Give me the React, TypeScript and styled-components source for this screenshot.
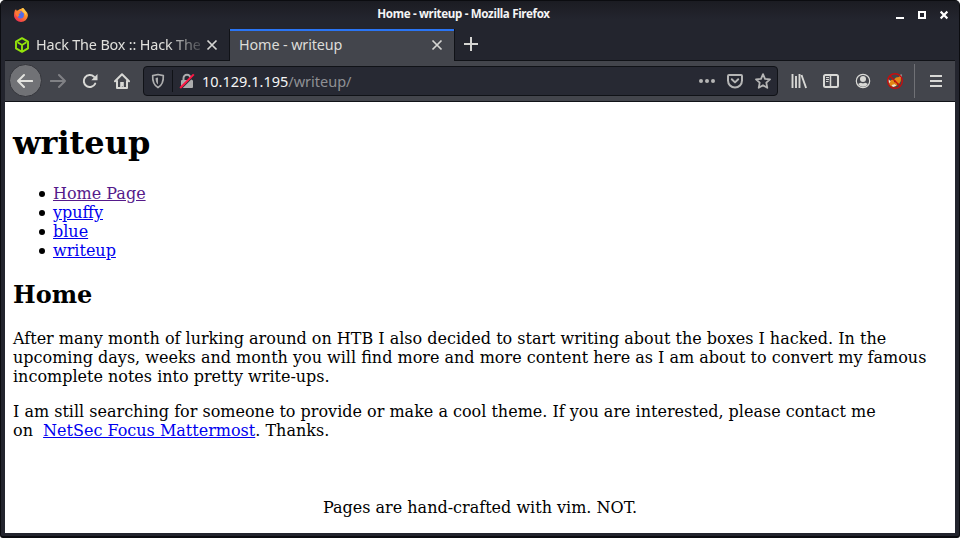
import React from "react";
import styled, { createGlobalStyle } from "styled-components";

const Global = createGlobalStyle`
  * { box-sizing: border-box; }
  body { margin: 0; background: #fff; overflow: hidden; }
  svg { display: block; flex: none; }
`;

const Window = styled.div`
  width: 960px;
  height: 538px;
  display: flex;
  flex-direction: column;
  background: #23252e;
  border: 1px solid #0b0c10;
  border-bottom-width: 2px;
  border-radius: 5px 5px 3px 3px;
  padding: 0 4px 3px;
  overflow: hidden;
  font-family: "Noto Sans", sans-serif;
`;

const TitleBar = styled.header`
  height: 28px;
  flex: none;
  margin: 0 -4px;
  padding: 0 11px 0 12px;
  display: grid;
  grid-template-columns: 26px 1fr 60px;
  align-items: center;
  background: linear-gradient(#1b1c22, #23252e 18px);
`;

const WindowTitle = styled.div`
  text-align: center;
  color: #f4f4f5;
  font-size: 11.6px;
  font-weight: 700;
  line-height: 26px;
  height: 28px;
  letter-spacing: -0.34px;
  white-space: nowrap;
`;

const WindowButtons = styled.div`
  display: flex;
  justify-content: flex-end;
  gap: 14px;
`;

const TabStrip = styled.nav`
  height: 32px;
  flex: none;
  display: flex;
  align-items: stretch;
`;

const Tab = styled.div<{ $active?: boolean }>`
  width: ${(p) => (p.$active ? 224 : 225)}px;
  flex: none;
  display: flex;
  align-items: center;
  padding: ${(p) => (p.$active ? "0 11px 2px 9px" : "1px 11px 0 9px")};
  color: ${(p) => (p.$active ? "#dcdcd8" : "#e0e0dc")};
  background: ${(p) => (p.$active ? "#43454c" : "transparent")};
  border-top: ${(p) => (p.$active ? "2px solid #2a75f5" : "0")};
  border-bottom: ${(p) => (p.$active ? "0" : "1px solid #101217")};
  border-right: ${(p) => (p.$active ? "0" : "1px solid #101217")};
`;

const TabLabel = styled.span<{ $fade?: boolean }>`
  flex: 1;
  min-width: 0;
  margin-left: ${(p) => (p.$fade ? 6 : 0)}px;
  margin-right: ${(p) => (p.$fade ? 6 : 0)}px;
  font-size: 14.4px;
  letter-spacing: ${(p) => (p.$fade ? "-0.16px" : "-0.13px")};
  line-height: 20px;
  white-space: nowrap;
  overflow: hidden;
  mask-image: ${(p) => (p.$fade ? "linear-gradient(to left, rgba(0, 0, 0, 0.2), #000 32px)" : "none")};
`;

const TabRest = styled.div`
  flex: 1;
  padding: 8px 0 0 9px;
  border-left: 1px solid #101217;
  border-bottom: 1px solid #101217;
`;

const Toolbar = styled.div`
  height: 41px;
  flex: none;
  display: flex;
  align-items: center;
  background: #43454c;
  border-bottom: 1px solid #101217;
  padding: 0 0 1px 3.5px;
`;

const BackButton = styled.div`
  width: 33px;
  height: 33px;
  flex: none;
  border-radius: 50%;
  border: 1px solid #34353b;
  background: #717276;
  display: flex;
  align-items: center;
  justify-content: center;
`;

const Slot = styled.div<{ $w: number }>`
  width: ${(p) => p.$w}px;
  flex: none;
  display: flex;
  justify-content: center;
`;

const UrlBar = styled.div`
  width: 635px;
  height: 30px;
  flex: none;
  margin-left: 5px;
  display: flex;
  align-items: center;
  background: #272933;
  border: 1px solid #101217;
  border-radius: 4px;
  padding: 0 6px 0 5px;
`;

const Divider = styled.i<{ $h: number; $light?: boolean }>`
  width: 1px;
  height: ${(p) => p.$h}px;
  background: ${(p) => (p.$light ? "#707176" : "#101217")};
`;

const Address = styled.div`
  flex: 1;
  margin-left: 7px;
  color: #f5f5f5;
  font-size: 14.5px;
  line-height: 20px;
  white-space: nowrap;
`;

const AddressPath = styled.span`
  color: #8f9093;
`;

const UrlActions = styled.div`
  display: flex;
  align-items: center;
  gap: 12px;
`;

const Page = styled.main`
  flex: 1;
  min-height: 0;
  overflow: hidden;
  background: #fff;
  color: #000;
  padding: 23px 8px 0;
  font: 16px/19px "DejaVu Serif", serif;
`;

const Title = styled.h1`
  margin: 0 0 22px;
  font-size: 32px;
  line-height: 37px;
`;

const Links = styled.ul`
  margin: 0 0 20px;
  padding-left: 26px;
  list-style: none;
`;

const LinkItem = styled.li`
  display: flex;
  align-items: center;
  height: 19px;
  &::before {
    content: "";
    width: 6.4px;
    height: 6.4px;
    margin: 1px 7.6px 0 0;
    border-radius: 50%;
    background: #000;
  }
`;

const Link = styled.a<{ $visited?: boolean }>`
  color: ${(p) => (p.$visited ? "#551a8b" : "#0000ee")};
  text-decoration: underline;
`;

const Heading = styled.h2`
  margin: 0 0 20px;
  font-size: 24px;
  line-height: 29px;
`;

const Paragraph = styled.p`
  margin: 0 0 16px;
  white-space: nowrap;
`;

const Footer = styled.footer`
  margin-top: 58px;
  text-align: center;
`;

const FirefoxLogo = () => (
  <svg width="16" height="16" viewBox="0 0 16 16">
    <defs>
      <linearGradient id="flame" x1="1" y1="0" x2="0.2" y2="1">
        <stop offset="0" stopColor="#ffe14d" />
        <stop offset="0.45" stopColor="#ff8a2b" />
        <stop offset="1" stopColor="#ed2555" />
      </linearGradient>
    </defs>
    <path d="M1.8 3.6 3 2.2l.7 1.5 1.6-.4C6.4 2 7.5 2 7.7 2l1.8-1 1.2.3L12 3.5c1.7 1 2.9 2.8 2.9 5.2a7 7 0 0 1-13.9.2c0-2 .2-3.8.8-5.3z" fill="url(#flame)" />
    <path d="M4.4 5.5 8 4l3 2.5-.3 3A3.3 3.3 0 0 1 5 10.3L4.3 8z" fill="#526ce8" />
    <path d="M3 4.2l4 .5 1 1-2.5 1.4.8 1.5L4.5 10 2.2 7z" fill="#ff7a32" />
    <path d="M9.5 1c2.2 1.2 4.7 3.8 3.3 7.4-.4-1.5-1.4-2.4-2.4-3.2C9.3 4.2 8.8 2.8 9.5 1z" fill="#ffc64a" />
  </svg>
);

const HackTheBox = () => (
  <svg width="16" height="16" viewBox="0 0 16 16" fill="none" stroke="#93e30b" strokeWidth="1.9" strokeLinejoin="round">
    <path d="M8 1.2 14 4.6v6.8L8 14.8 2 11.4V4.6zM3.5 5.3 8 8l4.5-2.7M8 8v6" />
  </svg>
);

const Close = () => (
  <svg width="12" height="12" viewBox="0 0 12 12" stroke="#d5d5d2" strokeWidth="1.7">
    <path d="M1.5 1.5l9 9m0-9l-9 9" />
  </svg>
);

const Minimise = () => (
  <svg width="8" height="10" viewBox="0 0 8 10" fill="#fff"><path d="M0 7h8v2H0z" /></svg>
);
const Maximise = () => (
  <svg width="8" height="10" viewBox="0 0 8 10" fill="none" stroke="#fff" strokeWidth="2"><path d="M1 2h6v6H1z" /></svg>
);
const CloseWindow = () => (
  <svg width="8" height="10" viewBox="0 0 8 10" stroke="#fff" strokeWidth="2.2"><path d="M.6 1.6l6.8 6.8m0-6.8L.6 8.4" /></svg>
);

const Plus = () => (
  <svg width="14" height="14" viewBox="0 0 14 14" stroke="#d5d5d2" strokeWidth="2"><path d="M0 7h14M7 0v14" /></svg>
);

const Arrow = ({ forward }: { forward?: boolean }) => (
  <svg width="16" height="16" viewBox="0 0 16 16" fill="none" stroke={forward ? "#808185" : "#e2e2de"} strokeWidth="2" strokeLinecap="round" strokeLinejoin="round">
    <path d={forward ? "M.8 8H15M9 2l6 6-6 6" : "M15.2 8H1M7 2L1 8l6 6"} />
  </svg>
);

const Reload = () => (
  <svg width="16" height="16" viewBox="0 0 16 16" fill="none" stroke="#d8d8d5" strokeWidth="2" strokeLinecap="round">
    <path d="M13.2 10.6A6 6 0 1 1 12 3.7" />
    <path d="M15.5 1v6.2H9.3z" fill="#d8d8d5" stroke="none" />
  </svg>
);

const Home = () => (
  <svg width="16" height="16" viewBox="0 0 16 16" fill="none" stroke="#d8d8d5" strokeWidth="2" strokeLinecap="round" strokeLinejoin="round">
    <path d="M1 8.2 8 1.3l7 6.9" />
    <path d="M3 8v7h10V8" />
    <path d="M6.2 9h3.6v6H8.9v-1.6H7.8V15H6.2z" fill="#d8d8d5" stroke="none" />
  </svg>
);

const Shield = () => (
  <svg width="14" height="16" viewBox="0 0 14 16" fill="none" stroke="#acacad" strokeWidth="1.7" strokeLinejoin="round">
    <path d="M7 1.5 12.3 2.6c.3 5.5-1 9.5-5.3 12-4.3-2.5-5.6-6.5-5.3-12z" />
    <path d="M7 4.6v7C5.1 9.8 4.6 7.8 4.6 5z" fill="#acacad" stroke="none" />
  </svg>
);

const InsecureLock = () => (
  <svg width="16" height="16" viewBox="0 0 16 16" fill="none">
    <path d="M4.5 8V5.2a3.5 3.5 0 0 1 7 0V8" stroke="#acacad" strokeWidth="2" />
    <rect x="2" y="7" width="12" height="8" rx="1" fill="#acacad" />
    <path d="M2 15.2 15 2.2" stroke="#272933" strokeWidth="2" />
    <path d="M1.2 15 14.8 1.4" stroke="#ff1744" strokeWidth="2" />
  </svg>
);

const Dots = () => (
  <svg width="16" height="16" viewBox="0 0 16 16" fill="#b5b5b5"><circle cx="2" cy="8" r="2" /><circle cx="8" cy="8" r="2" /><circle cx="14" cy="8" r="2" /></svg>
);

const Pocket = () => (
  <svg width="16" height="16" viewBox="0 0 16 16" fill="none" stroke="#b5b5b5" strokeWidth="2" strokeLinecap="round" strokeLinejoin="round">
    <path d="M2 2h12q1 0 1 1v4.5a7 7 0 0 1-14 0V3q0-1 1-1z" />
    <path d="M4.8 6.3 8 9.4l3.2-3.1" />
  </svg>
);

const Star = () => (
  <svg width="16" height="16" viewBox="0 0 16 16" fill="none" stroke="#b5b5b5" strokeWidth="1.8" strokeLinejoin="round">
    <path d="M8 1.1 10 5.8l5 .5-3.7 3.4 1 5.1L8 12.2l-4.3 2.6 1-5.1L1 6.3l5-.5z" />
  </svg>
);

const Library = () => (
  <svg width="16" height="16" viewBox="0 0 16 16" stroke="#d8d8d5" strokeWidth="1.9">
    <path d="M1.5 1v14M5 3v12M8.5 1v14M10.5 2l4.6 13" />
  </svg>
);

const Sidebar = () => (
  <svg width="16" height="16" viewBox="0 0 16 16" fill="none" stroke="#d8d8d5">
    <rect x="1" y="2" width="14" height="12" rx="1.5" strokeWidth="2" />
    <path d="M7.5 2v12" strokeWidth="1.5" />
    <path d="M3 4.5h3M3 6.5h3M3 8.5h2.5" />
  </svg>
);

const Account = () => (
  <svg width="16" height="16" viewBox="0 0 16 16" fill="none">
    <circle cx="8" cy="8" r="6.7" stroke="#d8d8d5" strokeWidth="1.2" />
    <circle cx="8" cy="6" r="3" fill="#d8d8d5" />
    <path d="M3.2 11q2-1.2 2.8-1.2Q8 10.8 10 9.8q.8 0 2.8 1.2A5.6 5.6 0 0 1 3.2 11z" fill="#d8d8d5" />
  </svg>
);

const FoxyProxy = () => (
  <svg width="16" height="16" viewBox="0 0 16 16" fill="none">
    <path d="M2 9 4 7l3-.4 2-2 3-.6 2-1.5-.2 5.5-2 3.5L8 13.6H4.5L2.5 12z" fill="#e38614" />
    <path d="M1 5.5l2.6 2.9L1.8 10.6zM12.3 2.6l2.2-1.3-.3 4.5zM4.6 12l3.2-.8 1.5 1.6L6 14z" fill="#f0e6d6" />
    <path d="M7 8.5h2M10 11h1.5" stroke="#6b3e0d" strokeWidth="1.3" />
    <circle cx="8" cy="8" r="7.3" stroke="#c80d0d" strokeWidth="1.4" />
    <path d="M2.8 2.8l10.4 10.4" stroke="#c80d0d" strokeWidth="1.4" />
  </svg>
);

const Menu = () => (
  <svg width="12" height="12" viewBox="0 0 12 12" stroke="#d8d8d5" strokeWidth="2"><path d="M0 1h12M0 6h12M0 11h12" /></svg>
);

export default function App() {
  return (
    <>
      <Global />
      <Window>
        <TitleBar>
          <FirefoxLogo />
          <WindowTitle>Home - writeup - Mozilla Firefox</WindowTitle>
          <WindowButtons><Minimise /><Maximise /><CloseWindow /></WindowButtons>
        </TitleBar>
        <TabStrip>
          <Tab>
            <HackTheBox />
            <TabLabel $fade>Hack The Box :: Hack The</TabLabel>
            <Close />
          </Tab>
          <Tab $active>
            <TabLabel>Home - writeup</TabLabel>
            <Close />
          </Tab>
          <TabRest><Plus /></TabRest>
        </TabStrip>
        <Toolbar>
          <BackButton><Arrow /></BackButton>
          <Slot $w={33}><Arrow forward /></Slot>
          <Slot $w={31}><Reload /></Slot>
          <Slot $w={32.5}><Home /></Slot>
          <UrlBar>
            <Slot $w={18}><Shield /></Slot>
            <Slot $w={11}><Divider $h={22} /></Slot>
            <Slot $w={17}><InsecureLock /></Slot>
            <Address>10.129.1.195<AddressPath>/writeup/</AddressPath></Address>
            <UrlActions><Dots /><Pocket /><Star /></UrlActions>
          </UrlBar>
          <Slot $w={42}><Library /></Slot>
          <Slot $w={22}><Sidebar /></Slot>
          <Slot $w={42}><Account /></Slot>
          <Slot $w={22}><FoxyProxy /></Slot>
          <Slot $w={17}><Divider $h={34} $light /></Slot>
          <Slot $w={26}><Menu /></Slot>
        </Toolbar>
        <Page>
          <Title>writeup</Title>
          <Links>
            <LinkItem><Link $visited>Home Page</Link></LinkItem>
            <LinkItem><Link>ypuffy</Link></LinkItem>
            <LinkItem><Link>blue</Link></LinkItem>
            <LinkItem><Link>writeup</Link></LinkItem>
          </Links>
          <Heading>Home</Heading>
          <Paragraph>
            After many month of lurking around on HTB I also decided to start writing about the boxes I hacked. In the<br />
            upcoming days, weeks and month you will find more and more content here as I am about to convert my famous<br />
            incomplete notes into pretty write-ups.
          </Paragraph>
          <Paragraph>
            I am still searching for someone to provide or make a cool theme. If you are interested, please contact me<br />
            on&nbsp; <Link>NetSec Focus Mattermost</Link>. Thanks.
          </Paragraph>
          <Footer>Pages are hand-crafted with vim. NOT.</Footer>
        </Page>
      </Window>
    </>
  );
}
